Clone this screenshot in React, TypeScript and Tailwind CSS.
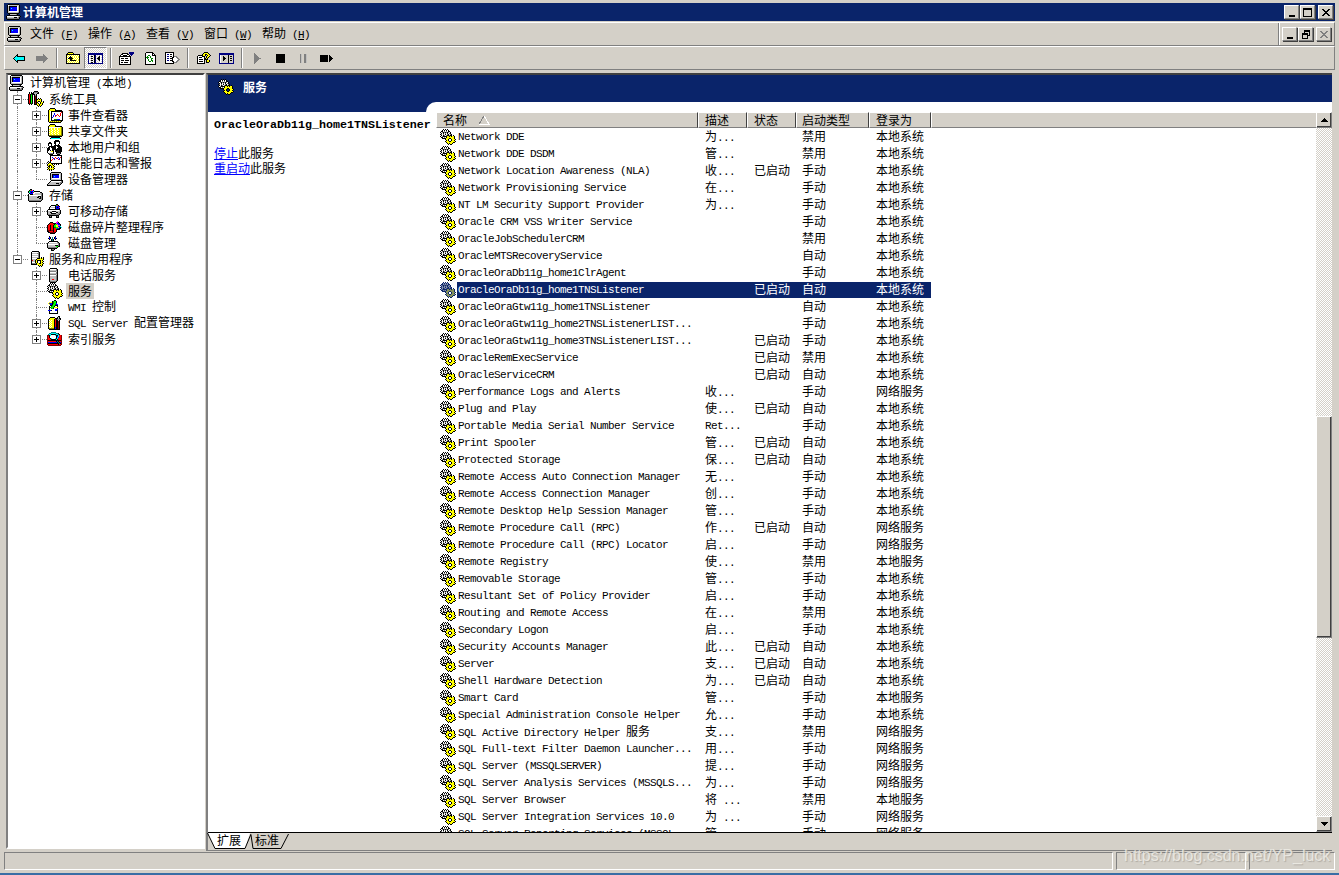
import React from "react";

const NAVY = "bg-[#0a246a]";

const colors: Record<string, string> = {
  k: "#000000", w: "#ffffff", g: "#808080", s: "#c0c0c0", y: "#ffff00", o: "#808000",
  b: "#0000ff", n: "#000080", c: "#00ffff", t: "#008080", r: "#ff0000", m: "#800000",
  e: "#00ff00", d: "#008000", p: "#ff00ff",
};

const dimmed: Record<string, string> = {
  k: "#0a246a", w: "#8592b5", g: "#49587f", y: "#85925a", s: "#657a95",
};

function Px({ map, dim }: { map: string[]; dim?: boolean }) {
  const w = Math.max(...map.map((r) => r.length));
  const groups: Record<string, string> = {};
  map.forEach((row, y) => {
    row.split("").forEach((ch, x) => {
      if (ch !== ".") groups[ch] = (groups[ch] || "") + `M${x} ${y}h1v1h-1z`;
    });
  });
  return (
    <svg width={w} height={map.length} viewBox={`0 0 ${w} ${map.length}`} shapeRendering="crispEdges" className="shrink-0">
      {Object.keys(groups).map((c) => (
        <path key={c} d={groups[c]} fill={dim ? dimmed[c] : colors[c]} />
      ))}
    </svg>
  );
}

const gear = [
  "...k.k.k........",
  "..kwkwkwk.......",
  ".kkwgwgwkk......",
  "kwgkgkgkgwk.....",
  ".kwkwgwkwgk.....",
  "kgwgwkwgkwgk....",
  ".kwkgwgkkgkk.k..",
  "kwgkkkkyykykyyk.",
  ".kkwgwkyyyyyyyk.",
  "..kkkkyyykkyyyk.",
  ".....kyyk..kyyyk",
  "......kyk..kyyk.",
  ".....kyyykkyyyyk",
  "......kyyyyyykk.",
  ".......kykyyk...",
  "........k.kk....",
];

const computer = [
  "..kkkkkkkkkkk...",
  ".kwssssssssssk..",
  ".kskkkkkkkkwsk..",
  ".kskbbbbbbbwsk..",
  ".kskbcbbbbbwsk..",
  ".kskbbbbbbbwsk..",
  ".kskbbbbbbbwsk..",
  ".kswwwwwwwwwsk..",
  ".kssssssssssgk..",
  "..kkkkkkkkkkk...",
  "...kssssssgk....",
  ".kkkkkkkkkkkkk..",
  "kwwwwwwwwwwwsgk.",
  "kssssssskkksgk..",
  "kggggggggggggk..",
  ".kkkkkkkkkkkk...",
];

const tools = [
  "......kkkk......",
  ".k.k.kggggk.....",
  ".k.kkkssskk.....",
  "krkdkkksk.......",
  "krkek.kgk.......",
  "krkek.kmk.......",
  "krkek.kmk.......",
  "krkek.kmk.k.k...",
  "krkek.kmkkykyk..",
  "krkek.kmkyyyyk..",
  "krkek.kmkykkyk.k",
  "krkek.kmkk..kyyk",
  "kmkdk.kmkyk.kyk.",
  ".k.k..kkkyykyyk.",
  ".........kykyk..",
  "..........k.k...",
];

const eventFolder = [
  "...kkkkk........",
  "..kyyyyyk.......",
  ".kyyyyyykkkkkkk.",
  ".kywkkkkkkkkkkkk",
  ".kywkwwwwwwwwwrk",
  ".kywkwwbwwwwwrwk",
  ".kywkwwbwwrwwrwk",
  ".kywkwbwbrwrwrwk",
  ".kywkwbwrwwwrwwk",
  ".kywkbwwwwwwwwwk",
  ".kywkwwwwwwwwwwk",
  ".kywkwwdddbbbwwk",
  ".kywkkkkkkkkkkkk",
  ".kyoyoyoyoyoyok.",
  "..kkkkkkkkkkkk..",
];

const folder = [
  "...kkkkk........",
  "..kyyyyyk.......",
  ".kyyyyyykkkkkkk.",
  ".kwwwwwwwwwwwyok",
  ".kwywyywyywyyyok",
  ".kyywyywyywyyyok",
  ".kwyywyywyywyyok",
  ".kyywyywyywyyyok",
  ".kwyywyywyywyyok",
  ".kyywyywyywyyyok",
  ".kwyywyywyywyyok",
  ".koooooooooooook",
  "..kkkkkkkkkkkkk.",
  "....kkkkkkkkk...",
  "...kccccccccck..",
];

const users = [
  "........kkkk....",
  ".......kkkkkk...",
  "..kk...kkwwwk...",
  ".kkkk..kkwwwk...",
  ".kwwk...kwwk....",
  ".kwwk..kkkkkk...",
  "..kkkkkkkwkkkk..",
  ".kkwkkkkkwwkkkk.",
  "kkkwwkkkkwkkkkk.",
  "kkkwwkkkkkkkkkk.",
  "kkwkwkk.kkkkkkk.",
  "kwwwyyk.kkkkkkk.",
  "kwwwwwk..kkkkk..",
  ".kggggk..kgggk..",
  "..kkkk....kkk...",
];

const perf = [
  "...kkkkkkkkkkkk.",
  "...kwwwwwwwwwwk.",
  "...kwbwwrwwbwrk.",
  "...kwwbrwrbwbwk.",
  "...kwrwbwwwrbwk.",
  "...krwwwwwwwwwk.",
  ".k.kwwwwwwwwwwk.",
  "k.kkwwwwwwwwwwk.",
  ".kyykkkkkkkkkkk.",
  "kyyyyk.k.k.k....",
  "kykkyyk.........",
  ".kk.kyyk........",
  "kyk.kyk.........",
  ".kyyyyyk........",
  "kykykyk.........",
  "..k.k...........",
];

const monitorDesk = [
  "....kkkkkkkkkk..",
  "...kssssssssssk.",
  "...kskkkkkkkwsk.",
  "...kskbbbbbbwsk.",
  "...kskbcbbbbwsk.",
  "...kskbbbbbbwsk.",
  "...kswwwwwwwwsk.",
  "...kssssssssssk.",
  "....kkkkkkkkkkkk",
  "...kwwwwwwwwwwgk",
  "..kssssssssssggk",
  ".kssssssskkksgk.",
  "kssssssssssggk..",
  "kkkkkkkkkkkkk...",
];

const storage = [
  "..kk............",
  ".kerpk..........",
  "kebbbckkkkkk....",
  "kcbkbrwwwwwwkk..",
  ".kbbbwwssssssgk.",
  "kwkkkssssssssgk.",
  "kwwwwwwwwwwwwgk.",
  "kssssssssskkkgk.",
  "ksssssssskkskgk.",
  "ksssssssssskkgk.",
  "kssssssssssssgk.",
  "kggggggggggggk..",
  ".kkkkkkkkkkkk...",
];

const removable = [
  ".........kk.....",
  "....kkkkkerk....",
  "...kwwwwkbbbk...",
  "..kssssskbkbp...",
  "..kwwwwwkbbbk...",
  ".kkkkkkkkkkkk...",
  "kwwwwwwwwwwwsk..",
  "ksssskkkkssssk..",
  "ksskkwwwwkksgk..",
  "kssskkkkkssggk..",
  "kgggggggggggk...",
  ".kkkkkkkkkkk....",
  "..kgk....kgk....",
  "..kkk....kkk....",
];

const defrag = [
  "..........p.....",
  "...kkk...ppk....",
  "..krrrkkkpbbk...",
  ".krrrrrkeepbbk..",
  "krrkrrkeeyyppk..",
  "krrkrrkeeyybbc..",
  "krrkrrkddeeybkc.",
  "krrkrrkrrebbkk..",
  "krrkrrkrrkkkk...",
  "kmmkmmkrrk......",
  "kkrrrrkrrk......",
  ".kkmmmmmk.......",
  "...kkkkk........",
];

const diskMgmt = [
  "..k.....k.......",
  "..bk.t.kb.......",
  ".kbk.t.kbk......",
  "..k.ktk.k.......",
  "....ktk.........",
  "..kkkkkkkkk.....",
  ".kwwwwwwwwgk....",
  "kssssssssssgk...",
  "kwwwwwwwwwwgk...",
  "kssssssskkkgk...",
  "ksssssssseekk...",
  "kgggggggggk.....",
  ".kkkkkkkkk......",
  "....kggk........",
  "....kkk.........",
];

const serverGear = [
  "....kkkkkkk.....",
  "...kwwwwwwgk....",
  "...ksssssggk....",
  "...kwwwwwwgk....",
  "...kssssssgk....",
  "...kwwwwwwgk....",
  "...kssssssgk.k.k",
  "...kwwwwwkkkykyk",
  "...ksssskyyyyyyk",
  "...krsskykkkkyk.",
  "...kssskyk..kyyk",
  "...kwwwkyk..kyk.",
  "...kggggkyykkyyk",
  "...kkkkkkyyyyyk.",
  "..........kykyk.",
  "...........k.k..",
];

const tower = [
  "...kkkkkkk......",
  "..kwwwwwwgk.....",
  "..kssssssgk.....",
  "..kggggggsk.....",
  "..kwwwwwwgk.....",
  "..kssssssgk.....",
  "..kggggggsk.....",
  "..kwwwwwwgk.....",
  "..kssssssgk.....",
  "..kssssssgk.....",
  "..kssssssgk.....",
  "..kssrrssgk.....",
  "..kssssssgk.....",
  "..kggggggk......",
  "...kkkkkk.......",
];

const wmi = [
  ".......kk.......",
  ".....kdeek......",
  "..yyykdeek......",
  ".ybbbkdeeb......",
  "..ybbkeedbb.....",
  "...kkdeekkk.....",
  "..kwdeekwwk.....",
  "..kdeedyyyy.....",
  "..kwdekwwwk.....",
  "..kwwwwwbbb.....",
  ".bbbkwwwbbk.....",
  "..kwwwwwwwk.....",
  "..kwwwwwwwk.....",
  "..kkkkkkkkk.....",
];

const sqlFolder = [
  "...........kk...",
  "...kkkkk..ksk...",
  "..kyyyyykkkskk..",
  ".kyyyyykrkgggk..",
  ".kwywyykrkksk...",
  ".kywyyykrkkmk...",
  ".kwywyykrkkmk...",
  ".kywyyykrkkmk...",
  ".kwywyykrkkmk...",
  ".kywyyykrkkmk...",
  ".kwywyykrkkmk...",
  ".kywyyykbkkmk...",
  ".koooookbkkmk...",
  "..kkkkkkkkkkk...",
];

const indexSvc = [
  "....ttttt.......",
  "..ttcccccttk....",
  ".tcckkkkkcctk...",
  "mmkcwwwwckkcrrm.",
  "mrkwwwwwwkbcrrm.",
  "mrkwwwwwwkcbrrm.",
  "mrrkcwwwckcrrrm.",
  "mrrrkkkkkckrrrm.",
  "mkkkkkkkkkkkkkm.",
  "mrrrrrrrrktkrrm.",
  "mbbbbbbbbbktkbm.",
  "mkkkkkkkkkkktkm.",
  "mrrrrrrrrrrkrrm.",
  ".mmmmmmmmmmmmm..",
];

const back = [
  "....k.......",
  "...kk.......",
  "..kckkkkkkkk",
  ".kccccccccck",
  "kcccccccccck",
  ".kccccccccck",
  "..kckkkkkkkk",
  "...kk.......",
  "....k.......",
];

const forward = [
  ".......g....",
  ".......gg...",
  "gggggggggg..",
  "ggggggggggg.",
  "gggggggggggg",
  "ggggggggggg.",
  "gggggggggg..",
  ".......gg...",
  ".......g....",
];

const upFolder = [
  "...kkkkk........",
  "..kyyyyyk.......",
  ".kkkkkkkkkkkkkk.",
  ".kywywywywywywk.",
  ".kwywkwywywywyk.",
  ".kywkkkywywywyk.",
  ".kwkkkkkywywywk.",
  ".kywykkywywywyk.",
  ".kwywkkkkkkywyk.",
  ".kywywywywywywk.",
  ".kwywywywywywyk.",
  ".kkkkkkkkkkkkkk.",
];

const showTree = [
  "nnnnnnnnnnnnnnn",
  "nnnnnnnnnnnnnnn",
  "nw....kn....w.n",
  "nw.kk.kn...kw.n",
  "nw....kn..kkw.n",
  "nw.kk.kn.kkkw.n",
  "nw....kn..kkw.n",
  "nw.kk.kn...kw.n",
  "nw....kn....w.n",
  "nw.kk.kn....w.n",
  "nnnnnnnnnnnnnnn",
];

const props = [
  "..........nnnnn.",
  "...kkkkkk.nnnnn.",
  "..kkwwwwkk.nnn..",
  ".kwwkkkkwwk.n...",
  "kkkkkkkkkkkk....",
  "kwwwwwwwwwwk....",
  "kwkkkwkkkwwk....",
  "kwwwwwwwwwwk....",
  "kwkkkwkkkkwk....",
  "kwwwwwwwwwwk....",
  "kwkkwkkkkwwk....",
  "kwwwwwwwwwwk....",
  "kkkkkkkkkkkk....",
];

const refresh = [
  "..kkkkkkk...",
  ".kwwwwwwkk..",
  ".kwwwwwwkwk.",
  ".kwwddwwkkkk",
  ".kwdwwdwwwwk",
  ".kdddwdwwwwk",
  ".kwdwwwddwwk",
  ".kwwdwwdwwwk",
  ".kwwdwwddwwk",
  ".kwwwddwdwwk",
  ".kwwwwwwwwwk",
  ".kwwwwwwwwwk",
  ".kkkkkkkkkkk",
];

const exportList = [
  "kkkkkkkkk.......",
  "kwwwwwwwk.......",
  "kwnnwkkwk.......",
  "kwwwwwwwk.......",
  "kwnnwkkwkggg....",
  "kwwwwwwkkwwgg...",
  "kwnnwkkkwwwwgg..",
  "kwwwwwwkwwwwwgg.",
  "kwnnwkkkwwwwgg..",
  "kwwwwwwkkwwgg...",
  "kwwwwwwwkggg....",
  "kkkkkkkkk.......",
];

const help = [
  "........kkkk....",
  ".......kyyyyk...",
  "......kyykkyyk..",
  "..kkkkkyyk.kyyk.",
  ".kwwwwkkk.kyyk..",
  ".kwkkkwwk.kyk...",
  ".kwwwwwwkkyk....",
  ".kwkkkkwkkkk....",
  ".kwwwwwwk.kyyk..",
  ".kwkkkkwk.kyyk..",
  ".kwwwwwwk.kkk...",
  ".kkkkkkkk.......",
];

const actionPane = [
  "nnnnnnnnnnnnnnn",
  "nnnnnnnnnnnnnnn",
  "nw.......k....n",
  "nw..k....k.kk.n",
  "nw..kk...k....n",
  "nw..kkk..k.kk.n",
  "nw..kk...k....n",
  "nw..k....k.kk.n",
  "nw.......k....n",
  "nw.......k....n",
  "nnnnnnnnnnnnnnn",
];

const play = [
  "g.......",
  "gg......",
  "ggg.....",
  "gggg....",
  "ggggg...",
  "ggggggg.",
  "ggggg...",
  "gggg....",
  "ggg.....",
  "gg......",
  "g.......",
];
const stop = Array(9).fill("kkkkkkkkk");
const pause = Array(9).fill("gs..ggs").concat([]);
const restart = [
  "kkkkkkkk.k...",
  "kkkkkkkk.kk..",
  "kkkkkkkk.kkk.",
  "kkkkkkkk.kkkk",
  "kkkkkkkk.kkk.",
  "kkkkkkkk.kk..",
  "kkkkkkkk.k...",
];

const winMin = ["......", "......", "......", "......", "......", "......", "......", "kkkkkk", "kkkkkk"];
const winMax = ["kkkkkkkkk", "kkkkkkkkk", "k.......k", "k.......k", "k.......k", "k.......k", "k.......k", "k.......k", "kkkkkkkkk"];
const winClose = ["kk....kk", ".kk..kk.", "..kkkk..", "...kk...", "..kkkk..", ".kk..kk.", "kk....kk"];
const winRestore = [
  "..kkkkkk",
  "..kkkkkk",
  "..k....k",
  "kkkkkk.k",
  "kkkkkk.k",
  "k....kkk",
  "k....k..",
  "k....k..",
  "kkkkkk..",
];
const winCloseOff = ["gg....gg", ".gg..gg.", "..gggg..", "...gg...", "..gggg..", ".gg..gg.", "gg....gg"];
const triUp = ["...k...", "..kkk..", ".kkkkk.", "kkkkkkk"];
const triDown = ["kkkkkkk", ".kkkkk.", "..kkk..", "...k..."];

// SimSun-like mix: latin is half the CJK width
function T({ text, bold }: { text: string; bold?: boolean }) {
  const parts = text.split(/([\u4e00-\u9fff]+)/).filter(Boolean);
  return (
    <>
      {parts.map((p, i) =>
        /[\u4e00-\u9fff]/.test(p) ? (
          <span key={i} className="font-['Noto_Sans_CJK_SC',sans-serif] text-[12px] leading-[14px]">
            {p}
          </span>
        ) : (
          <span
            key={i}
            className={
              bold
                ? "font-['Liberation_Mono',monospace] font-bold text-[11.67px] leading-[14px] whitespace-pre"
                : "font-['Liberation_Mono',monospace] text-[11px] tracking-[-0.6px] leading-[14px] whitespace-pre"
            }
          >
            {p}
          </span>
        )
      )}
    </>
  );
}

const raised = "border border-t-white border-l-white border-b-[#808080] border-r-[#808080]";

function WinBtn({ map, className }: { map: string[]; className?: string }) {
  return (
    <div className={`w-[15px] h-[14px] bg-[#d4d0c8] flex items-center justify-center shadow-[1px_1px_0_#404040] ${raised} ${className || ""}`}>
      <Px map={map} />
    </div>
  );
}

function Sep() {
  return (
    <div className="w-2 h-[20px] flex justify-center shrink-0">
      <div className="w-px h-full bg-[#808080]" />
      <div className="w-px h-full bg-white" />
    </div>
  );
}

function ToolBtn({ map, pressed }: { map: string[]; pressed?: boolean }) {
  return (
    <div
      className={
        pressed
          ? "w-[23px] h-[22px] flex items-center justify-center shrink-0 border border-t-[#808080] border-l-[#808080] border-b-white border-r-white bg-[repeating-conic-gradient(#d4d0c8_0_25%,#ffffff_0_50%)] bg-[length:2px_2px]"
          : "w-[23px] h-[22px] flex items-center justify-center shrink-0"
      }
    >
      <Px map={map} />
    </div>
  );
}

type TreeNode = {
  label: string;
  icon: string[];
  level: 0 | 1 | 2;
  box?: "+" | "-";
  last?: boolean;
  outer?: boolean;
  selected?: boolean;
};

const tree: TreeNode[] = [
  { label: "计算机管理 (本地)", icon: computer, level: 0 },
  { label: "系统工具", icon: tools, level: 1, box: "-" },
  { label: "事件查看器", icon: eventFolder, level: 2, box: "+", outer: true },
  { label: "共享文件夹", icon: folder, level: 2, box: "+", outer: true },
  { label: "本地用户和组", icon: users, level: 2, box: "+", outer: true },
  { label: "性能日志和警报", icon: perf, level: 2, box: "+", outer: true },
  { label: "设备管理器", icon: monitorDesk, level: 2, last: true, outer: true },
  { label: "存储", icon: storage, level: 1, box: "-" },
  { label: "可移动存储", icon: removable, level: 2, box: "+", outer: true },
  { label: "磁盘碎片整理程序", icon: defrag, level: 2, outer: true },
  { label: "磁盘管理", icon: diskMgmt, level: 2, last: true, outer: true },
  { label: "服务和应用程序", icon: serverGear, level: 1, box: "-", last: true },
  { label: "电话服务", icon: tower, level: 2, box: "+" },
  { label: "服务", icon: gear, level: 2, selected: true },
  { label: "WMI 控制", icon: wmi, level: 2 },
  { label: "SQL Server 配置管理器", icon: sqlFolder, level: 2, box: "+" },
  { label: "索引服务", icon: indexSvc, level: 2, box: "+", last: true },
];

function Connector({ box, last, offset }: { box?: "+" | "-"; last?: boolean; offset: string }) {
  return (
    <div className="relative h-full">
      <div className={`absolute top-0 border-l border-dotted border-[#808080] ${offset} ${last ? "h-2" : "h-4"}`} />
      <div className={`absolute top-2 w-[11px] border-t border-dotted border-[#808080] ${offset}`} />
      {box && (
        <div className={`absolute top-[4px] w-[9px] h-[9px] -ml-[4px] bg-white border border-[#808080] flex items-center justify-center ${offset}`}>
          <div className="relative w-[5px] h-[5px]">
            <div className="absolute top-[2px] left-0 w-[5px] h-px bg-black" />
            {box === "+" && <div className="absolute left-[2px] top-0 w-px h-[5px] bg-black" />}
          </div>
        </div>
      )}
    </div>
  );
}

function TreeRow({ node }: { node: TreeNode }) {
  return (
    <div className="flex h-4 items-center">
      {node.level === 0 && <div className="w-px shrink-0" />}
      {node.level === 1 && (
        <div className="w-5 h-full shrink-0">
          <Connector box={node.box} last={node.last} offset="left-[9px]" />
        </div>
      )}
      {node.level === 2 && (
        <>
          <div className="w-5 h-full shrink-0 relative">
            {node.outer && <div className="absolute left-[9px] top-0 h-4 border-l border-dotted border-[#808080]" />}
          </div>
          <div className="w-[19px] h-full shrink-0">
            <Connector box={node.box} last={node.last} offset="left-[8px]" />
          </div>
        </>
      )}
      <div className="w-[18px] h-4 flex items-center shrink-0">
        <Px map={node.icon} />
      </div>
      <div className={`ml-px px-[2px] h-4 flex items-center whitespace-nowrap text-black ${node.selected ? "bg-[#d4d0c8]" : ""}`}>
        <div>
          <T text={node.label} />
        </div>
      </div>
    </div>
  );
}

const services: [string, string, string, string, string][] = [
  ["Network DDE", "为...", "", "禁用", "本地系统"],
  ["Network DDE DSDM", "管...", "", "禁用", "本地系统"],
  ["Network Location Awareness (NLA)", "收...", "已启动", "手动", "本地系统"],
  ["Network Provisioning Service", "在...", "", "手动", "本地系统"],
  ["NT LM Security Support Provider", "为...", "", "手动", "本地系统"],
  ["Oracle CRM VSS Writer Service", "", "", "手动", "本地系统"],
  ["OracleJobSchedulerCRM", "", "", "禁用", "本地系统"],
  ["OracleMTSRecoveryService", "", "", "自动", "本地系统"],
  ["OracleOraDb11g_home1ClrAgent", "", "", "手动", "本地系统"],
  ["OracleOraDb11g_home1TNSListener", "", "已启动", "自动", "本地系统"],
  ["OracleOraGtw11g_home1TNSListener", "", "", "自动", "本地系统"],
  ["OracleOraGtw11g_home2TNSListenerLIST...", "", "", "手动", "本地系统"],
  ["OracleOraGtw11g_home3TNSListenerLIST...", "", "已启动", "手动", "本地系统"],
  ["OracleRemExecService", "", "已启动", "禁用", "本地系统"],
  ["OracleServiceCRM", "", "已启动", "自动", "本地系统"],
  ["Performance Logs and Alerts", "收...", "", "手动", "网络服务"],
  ["Plug and Play", "使...", "已启动", "自动", "本地系统"],
  ["Portable Media Serial Number Service", "Ret...", "", "手动", "本地系统"],
  ["Print Spooler", "管...", "已启动", "自动", "本地系统"],
  ["Protected Storage", "保...", "已启动", "自动", "本地系统"],
  ["Remote Access Auto Connection Manager", "无...", "", "手动", "本地系统"],
  ["Remote Access Connection Manager", "创...", "", "手动", "本地系统"],
  ["Remote Desktop Help Session Manager", "管...", "", "手动", "本地系统"],
  ["Remote Procedure Call (RPC)", "作...", "已启动", "自动", "网络服务"],
  ["Remote Procedure Call (RPC) Locator", "启...", "", "手动", "网络服务"],
  ["Remote Registry", "使...", "", "禁用", "本地服务"],
  ["Removable Storage", "管...", "", "手动", "本地系统"],
  ["Resultant Set of Policy Provider", "启...", "", "手动", "本地系统"],
  ["Routing and Remote Access", "在...", "", "禁用", "本地系统"],
  ["Secondary Logon", "启...", "", "手动", "本地系统"],
  ["Security Accounts Manager", "此...", "已启动", "自动", "本地系统"],
  ["Server", "支...", "已启动", "自动", "本地系统"],
  ["Shell Hardware Detection", "为...", "已启动", "自动", "本地系统"],
  ["Smart Card", "管...", "", "手动", "本地服务"],
  ["Special Administration Console Helper", "允...", "", "手动", "本地系统"],
  ["SQL Active Directory Helper 服务", "支...", "", "禁用", "网络服务"],
  ["SQL Full-text Filter Daemon Launcher...", "用...", "", "手动", "网络服务"],
  ["SQL Server (MSSQLSERVER)", "提...", "", "手动", "网络服务"],
  ["SQL Server Analysis Services (MSSQLS...", "为...", "", "手动", "网络服务"],
  ["SQL Server Browser", "将 ...", "", "禁用", "本地服务"],
  ["SQL Server Integration Services 10.0", "为 ...", "", "手动", "网络服务"],
  ["SQL Server Reporting Services (MSSQL...", "管...", "", "手动", "网络服务"],
];

function HeaderCell({ label, className, children }: { label?: string; className: string; children?: React.ReactNode }) {
  return (
    <div className={`h-full bg-[#d4d0c8] flex items-center shrink-0 border-r border-r-[#404040] border-b border-b-[#808080] border-t border-t-white ${className}`}>
      {label && <T text={label} />}
      {children}
    </div>
  );
}

function ServiceRow({ row, selected }: { row: (typeof services)[number]; selected: boolean }) {
  const [name, desc, status, start, logon] = row;
  return (
    <div className="flex h-[17px] items-center w-[495px]">
      <div className="w-[21px] pl-1 shrink-0 flex items-center">
        <Px map={gear} dim={selected} />
      </div>
      <div className={`flex flex-1 h-[16px] items-center ${selected ? "bg-[#0a246a] text-white" : "text-black"}`}>
        <div className="w-[248px] pl-px shrink-0 whitespace-nowrap">
          <T text={name} />
        </div>
        <div className="w-[49px] shrink-0 whitespace-nowrap">
          <T text={desc} />
        </div>
        <div className="w-[48px] shrink-0 whitespace-nowrap">
          <T text={status} />
        </div>
        <div className="w-[74px] shrink-0 whitespace-nowrap">
          <T text={start} />
        </div>
        <div className="whitespace-nowrap">
          <T text={logon} />
        </div>
      </div>
    </div>
  );
}

function ScrollBtn({ map }: { map: string[] }) {
  return (
    <div className={`h-[16px] w-[16px] shrink-0 bg-[#d4d0c8] flex items-center justify-center shadow-[inset_-1px_-1px_0_#404040] ${raised}`}>
      <Px map={map} />
    </div>
  );
}

const track = "bg-[repeating-conic-gradient(#d4d0c8_0_25%,#ffffff_0_50%)] bg-[length:2px_2px]";
const menus = ["文件", "操作", "查看", "窗口", "帮助"];
const keys = ["F", "A", "V", "W", "H"];

export default function App() {
  return (
    <div className="relative w-[1339px] h-[875px] bg-[#d4d0c8] overflow-hidden flex flex-col pt-[3px] px-[4px] text-black text-[12px] leading-[14px]">
      {/* title bar */}
      <div className={`h-[18px] shrink-0 ${NAVY} flex items-center pl-[2px] pr-[2px]`}>
        <Px map={computer} />
        <div className="ml-px text-white font-['Noto_Sans_CJK_SC',sans-serif] text-[12px] font-bold">计算机管理</div>
        <div className="ml-auto flex">
          <WinBtn map={winMin} />
          <WinBtn map={winMax} className="ml-px" />
          <WinBtn map={winClose} className="ml-[3px]" />
        </div>
      </div>

      {/* menu bar */}
      <div className="mt-px h-[24px] shrink-0 flex items-center border border-t-white border-l-white border-b-[#808080] border-r-[#808080]">
        <div className="ml-[2px] w-[23px] shrink-0">
          <Px map={computer} />
        </div>
        {menus.map((m, i) => (
          <div key={m} className="w-[58px] shrink-0 whitespace-nowrap">
            <T text={m + " ("} />
            <span className="underline">
              <T text={keys[i]} />
            </span>
            <T text=")" />
          </div>
        ))}
        <div className="ml-auto h-full w-px bg-[#808080] mr-0" />
        <div className="w-px h-full bg-white mr-[2px]" />
        <div className="flex mr-[3px]">
          <WinBtn map={winMin} />
          <WinBtn map={winRestore} className="ml-px" />
          <WinBtn map={winCloseOff} className="ml-[3px]" />
        </div>
      </div>

      {/* toolbar */}
      <div className="h-[24px] shrink-0 flex items-center pl-[2px] border border-t-white border-l-white border-b-[#808080] border-r-[#808080]">
        <ToolBtn map={back} />
        <ToolBtn map={forward} />
        <Sep />
        <ToolBtn map={upFolder} />
        <ToolBtn map={showTree} pressed />
        <Sep />
        <ToolBtn map={props} />
        <ToolBtn map={refresh} />
        <ToolBtn map={exportList} />
        <Sep />
        <ToolBtn map={help} />
        <ToolBtn map={actionPane} />
        <Sep />
        <ToolBtn map={play} />
        <ToolBtn map={stop} />
        <ToolBtn map={pause} />
        <ToolBtn map={restart} />
      </div>

      {/* main */}
      <div className="mt-[3px] h-[778px] shrink-0 flex pl-[2px] pr-[3px]">
        <div className="w-[199px] h-[776px] shrink-0 bg-white overflow-hidden border-2 border-t-[#404040] border-l-[#808080] border-b-white border-r-white">
          {tree.map((n) => (
            <TreeRow key={n.label} node={n} />
          ))}
        </div>

        <div className="ml-px flex-1 min-w-0 flex flex-col border-t-2 border-t-[#404040] border-l-2 border-l-[#808080] border-b border-b-[#808080]">
          <div className={`h-[27px] shrink-0 ${NAVY} flex items-center pl-[10px] pb-[3px]`}>
            <Px map={gear} />
            <div className="ml-[9px] text-white font-['Noto_Sans_CJK_SC',sans-serif] text-[12px] font-bold">服务</div>
          </div>
          <div className={`h-[10px] shrink-0 ${NAVY}`}>
            <div className="ml-[218px] h-full bg-white rounded-tl-[10px]" />
          </div>
          <div className="flex-1 min-h-0 flex bg-white">
            <div className="w-[228px] shrink-0 pl-[6px] pt-[5px]">
              <div className="h-[14px] whitespace-nowrap">
                <T text="OracleOraDb11g_home1TNSListener" bold />
              </div>
              <div className="mt-[15px] h-[15px] flex items-center">
                <span className="text-[#0000ff] underline">
                  <T text="停止" />
                </span>
                <span>
                  <T text="此服务" />
                </span>
              </div>
              <div className="h-[14px] flex items-center">
                <span className="text-[#0000ff] underline">
                  <T text="重启动" />
                </span>
                <span>
                  <T text="此服务" />
                </span>
              </div>
            </div>

            <div className="flex-1 min-w-0 flex">
              <div className="flex-1 min-w-0 flex flex-col">
                <div className="h-[16px] shrink-0 flex">
                  <HeaderCell className="w-[262px] pl-[6px] border-l border-l-white">
                    <T text="名称" />
                    <svg width="11" height="9" viewBox="0 0 11 9" className="ml-[12px]" shapeRendering="crispEdges">
                      <path d="M5 0L0 8h10z" fill="#d4d0c8" stroke="#808080" />
                      <path d="M0 8h10L5 0" fill="none" stroke="#ffffff" />
                    </svg>
                  </HeaderCell>
                  <HeaderCell label="描述" className="w-[49px] pl-[6px] border-l border-l-white" />
                  <HeaderCell label="状态" className="w-[49px] pl-[6px] border-l border-l-white" />
                  <HeaderCell label="启动类型" className="w-[73px] pl-[5px] border-l border-l-white" />
                  <HeaderCell label="登录为" className="w-[62px] pl-[6px] border-l border-l-white" />
                  <div className="flex-1 h-full bg-[#d4d0c8] border-t border-t-white border-l border-l-white border-b border-b-[#808080]" />
                </div>
                <div className="flex-1 min-h-0 overflow-hidden">
                  {services.map((r) => (
                    <ServiceRow key={r[0]} row={r} selected={r[0] === "OracleOraDb11g_home1TNSListener"} />
                  ))}
                </div>
              </div>
              <div className="w-[16px] shrink-0 flex flex-col">
                <ScrollBtn map={triUp} />
                <div className={`h-[288px] shrink-0 ${track}`} />
                <div className={`h-[222px] shrink-0 bg-[#d4d0c8] shadow-[inset_-1px_-1px_0_#404040] ${raised}`} />
                <div className={`flex-1 ${track}`} />
                <ScrollBtn map={triDown} />
              </div>
            </div>
          </div>

          {/* tabs */}
          <div className="relative h-[18px] shrink-0 bg-[#d4d0c8] border-t border-t-black flex items-center pl-[9px] pb-[2px] gap-[14px]">
            <svg width="90" height="17" viewBox="0 0 90 17" className="absolute left-[-1px] top-0">
              <path d="M0.5 0L8 15.5H38L43 0z" fill="#ffffff" />
              <path d="M0.5 0L8 15.5H38L44 1M44 2L46 15.5H74L81.5 1" fill="none" stroke="#000000" />
            </svg>
            <div className="relative">
              <T text="扩展" />
            </div>
            <div className="relative">
              <T text="标准" />
            </div>
          </div>
        </div>
      </div>

      {/* status bar */}
      <div className="mt-px h-[18px] shrink-0 flex gap-[3px]">
        <div className="w-[1109px] border border-t-[#808080] border-l-[#808080] border-b-white border-r-white" />
        <div className="w-[130px] border border-t-[#808080] border-l-[#808080] border-b-white border-r-white" />
        <div className="flex-1 border border-t-[#808080] border-l-[#808080] border-b-white border-r-white" />
      </div>

      <div className="absolute left-0 right-0 bottom-0 h-[2px] bg-[#3a6ea5]" />
      <div className="absolute left-[1124px] top-[846px] font-['Liberation_Sans',sans-serif] text-[16px] leading-[20px] text-[#f2f0ea]/80 [text-shadow:1px_1px_1px_#b0aca4] whitespace-nowrap">
        https://blog.csdn.net/YP_luck
      </div>
    </div>
  );
}
